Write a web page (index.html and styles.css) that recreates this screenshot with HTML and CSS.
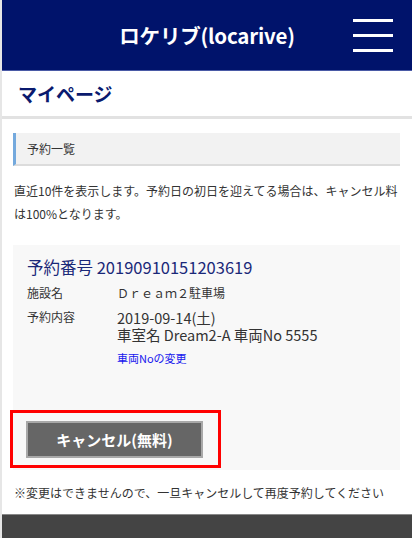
FILE: index.html
```html
<!DOCTYPE html>
<html lang="ja">
<head>
  <meta charset="UTF-8">
  <title>マイページ | ロケリブ(locarive)</title>
  <link rel="stylesheet" href="styles.css">
</head>
<body>

<div class="page">
  <header class="site-header">
    <span></span>
    <h1 class="site-title">ロケリブ(locarive)</h1>
    <button class="menu-btn" type="button" aria-label="menu">
      <span></span><span></span><span></span>
    </button>
  </header>

  <div class="page-title">マイページ</div>

  <main class="content">
    <h2 class="section-head">予約一覧</h2>
    <p class="lead">直近10件を表示します。予約日の初日を迎えてる場合は、キャンセル料は100%となります。</p>

    <div class="reserve-card">
      <h3 class="reserve-no">予約番号 20190910151203619</h3>
      <dl class="reserve-info">
        <dt>施設名</dt>
        <dd class="facility">Ｄｒｅａｍ２駐車場</dd>
        <dt>予約内容</dt>
        <dd class="detail">2019-09-14(土)<br>車室名 Dream2-A 車両No 5555</dd>
      </dl>
      <a class="change-link" href="#">車両Noの変更</a>

      <div class="cancel-wrap">
        <button class="cancel-btn" type="button">キャンセル(無料)</button>
      </div>
    </div>

    <p class="note">※変更はできませんので、一旦キャンセルして再度予約してください</p>
  </main>

  <footer class="site-footer"></footer>
</div>

</body>
</html>
```

FILE: styles.css
```css
body {
  margin: 0;
  font-family: "Noto Sans CJK JP", "Noto Sans", sans-serif;
  color: #333;
  background: #fff;
}
.page {
  border-left: 2px solid #e6e6e6;
  min-height: 538px;
}
.site-header {
  display: grid;
  grid-template-columns: 1fr auto 1fr;
  align-items: center;
  height: 70px;
  background: #00136b;
  border-bottom: 1px solid #4a5aa6;
}
.site-title {
  margin: 0;
  color: #fff;
  font-size: 20.5px;
  font-weight: bold;
  letter-spacing: -0.2px;
}
.menu-btn {
  justify-self: end;
  margin-right: 19px;
  padding: 0;
  width: 40px;
  background: none;
  border: none;
  display: flex;
  flex-direction: column;
  gap: 12px;
}
.menu-btn span {
  display: block;
  height: 3px;
  background: #fff;
}
.page-title {
  height: 45px;
  line-height: 45px;
  padding-left: 16px;
  font-size: 19px;
  font-weight: bold;
  color: #0a1a6e;
  border-bottom: 3px solid #e2e2e2;
}
.content {
  padding: 14px 12px 0 11px;
}
.section-head {
  margin: 0;
  height: 31px;
  line-height: 31px;
  padding-left: 11px;
  font-size: 12px;
  font-weight: normal;
  background: #f2f2f2;
  border-left: 3px solid #74a9dd;
  border-bottom: 2px solid #dcdcdc;
}
.lead {
  margin: 13px 0 0 1px;
  font-size: 12px;
  line-height: 23px;
}
.reserve-card {
  margin-top: 20px;
  background: #f8f8f8;
  padding: 10px 0 2px 14px;
}
.reserve-no {
  margin: 0;
  font-size: 16.5px;
  font-weight: normal;
  color: #1a2878;
}
.reserve-info {
  display: grid;
  grid-template-columns: 90px 1fr;
  margin: 5px 0 0;
  font-size: 12px;
}
.reserve-info dt {
  line-height: 18px;
}
.reserve-info dd {
  margin: 0;
}
.facility {
  line-height: 18px;
  margin-bottom: 6px !important;
}
.detail {
  font-size: 14.5px;
  line-height: 16.5px;
  padding-top: 2px;
}
.change-link {
  display: block;
  margin: 7px 0 0 90px;
  font-size: 11px;
  color: #1515ee;
  text-decoration: none;
}
.cancel-wrap {
  margin: 44px 0 0 -17px;
  width: 192px;
  border: 3px solid #f00;
  padding: 8px 0 7px 13px;
}
.cancel-btn {
  width: 177px;
  height: 37px;
  background: #666;
  border: 2px solid #a8a8a8;
  color: #fff;
  font-family: "Noto Sans CJK JP", "Noto Sans", sans-serif;
  font-size: 15px;
  font-weight: bold;
}
.note {
  margin: 14px 0 0 1px;
  font-size: 12px;
  line-height: 18px;
}
.site-footer {
  margin-top: 12px;
  height: 25px;
  background: #444;
  border-top: 1px solid #888;
}
```
